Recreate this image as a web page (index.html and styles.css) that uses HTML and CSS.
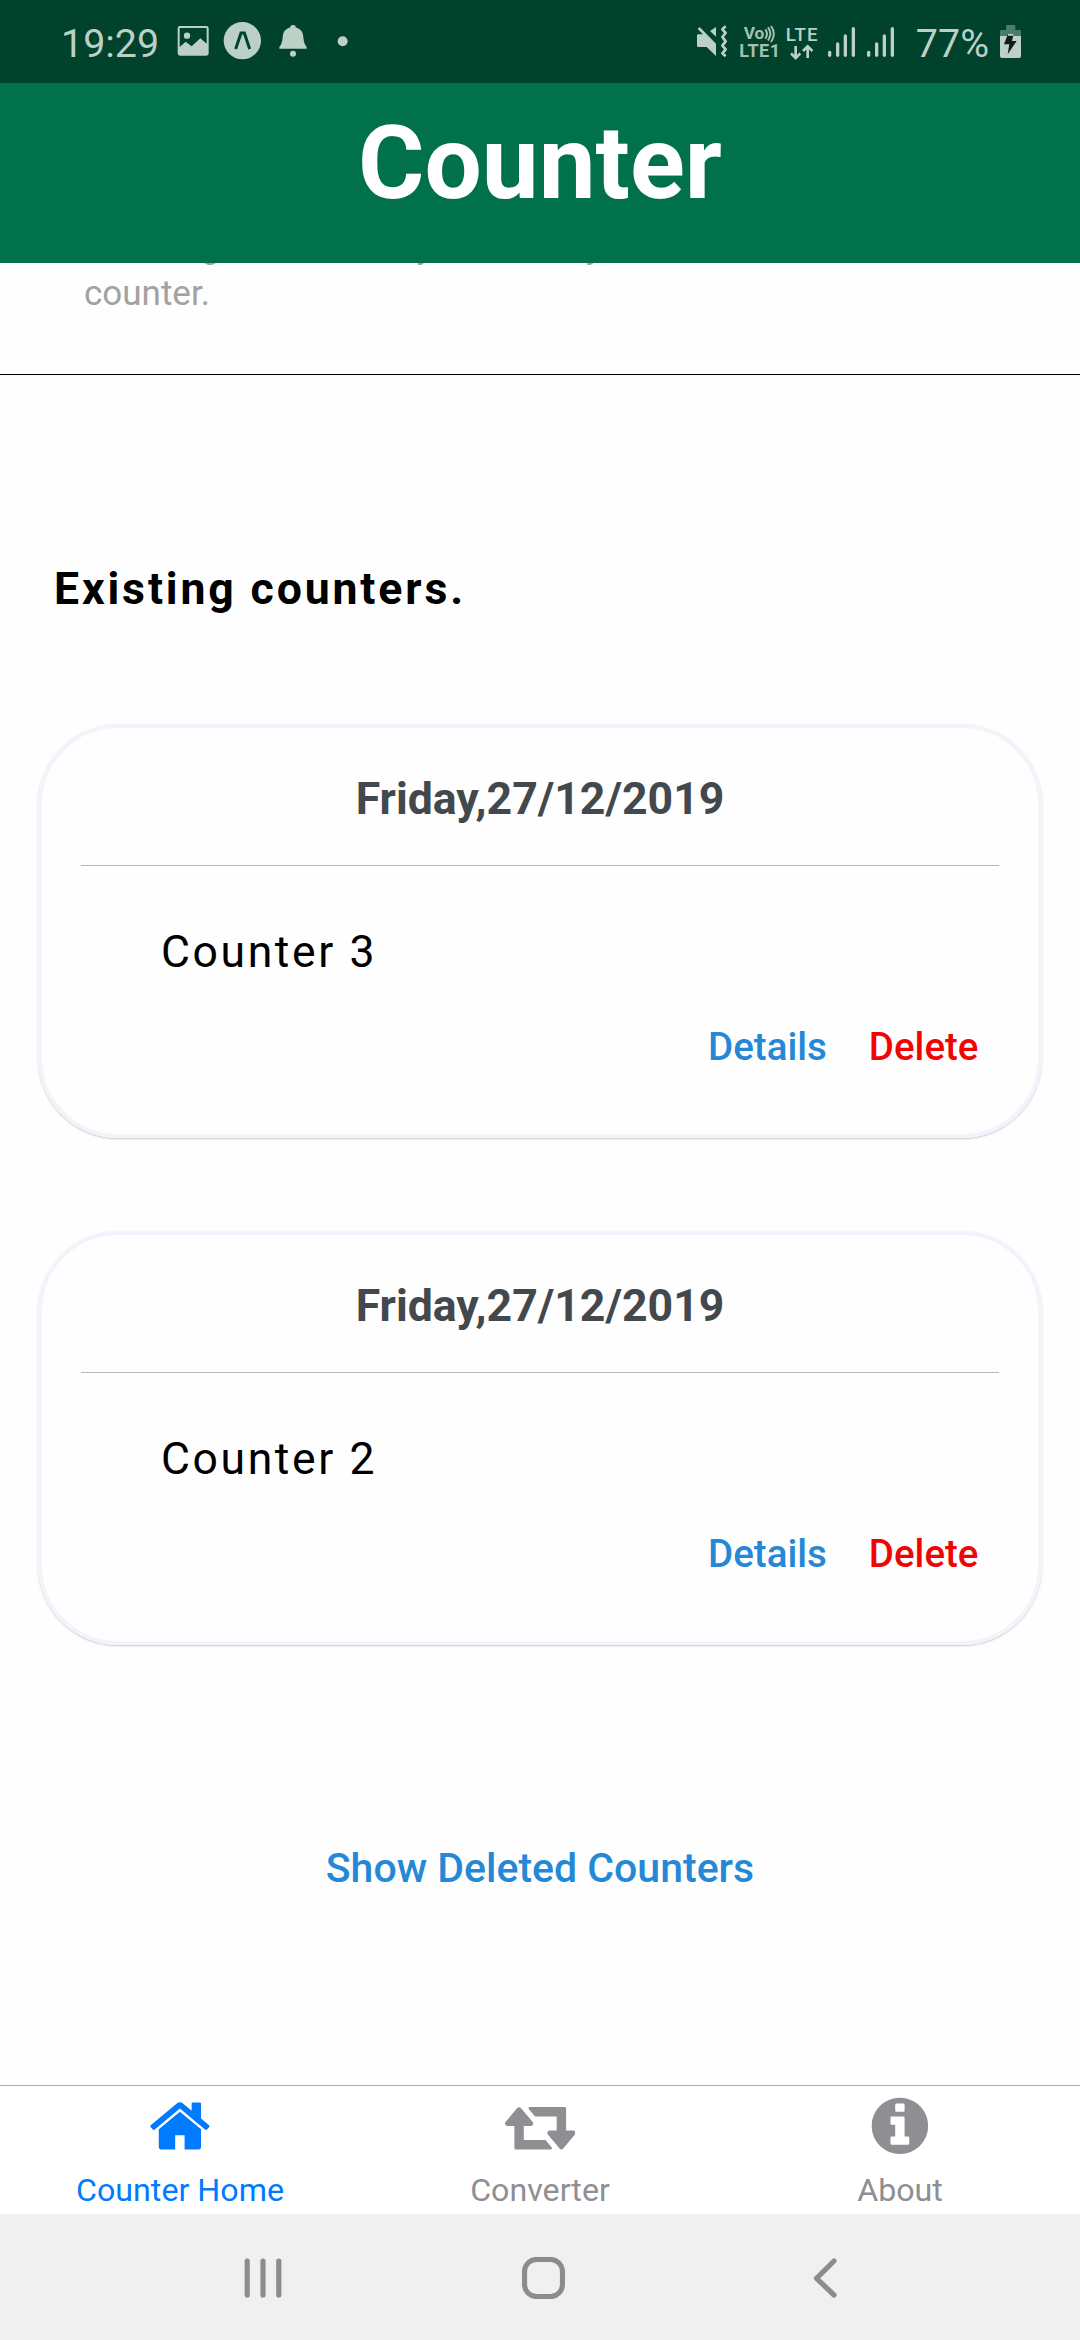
FILE: index.html
```html
<!DOCTYPE html>
<html lang="en">
<head>
<meta charset="utf-8">
<title>Counter</title>
<link rel="stylesheet" href="styles.css">
</head>
<body>
<div class="screen">
  <div class="status">
    <span class="status-text">19:29</span>
    <svg class="st-picture" width="34" height="83" viewBox="408 0 102 249" fill="#bcd0c7">
      <path fill-rule="evenodd" d="M420 78h79q7 0 7 7v75q0 7-7 7h-79q-7 0-7-7V85q0-7 7-7zM419 84v57l18-16 18 14 26-24 19 16V84z"/>
      <circle cx="441" cy="107" r="9.5"/>
    </svg>
    <svg class="st-expo" width="38" height="83" viewBox="550 0 114 249">
      <circle cx="608" cy="122" r="56" fill="#bcd0c7"/>
      <path d="M589 147l16-48h10l16 48" transform="translate(-1)" fill="none" stroke="#00422b" stroke-width="9"/>
    </svg>
    <svg class="st-bell" width="30" height="83" viewBox="714 0 90 249" fill="#bcd0c7">
      <path d="M751 82q0-7 8-7t8 7q22 6 23 30 1 19 10 29v5h-82v-5q9-10 10-29 1-24 23-30z"/>
      <circle cx="759" cy="161" r="9"/>
    </svg>
    <svg class="st-dot" width="11" height="83" viewBox="892 0 33 249" fill="#bcd0c7"><circle cx="909" cy="124" r="15"/></svg>
    <span class="spacer"></span>
    <svg class="st-mute" width="32" height="83" viewBox="45 0 96 249" fill="#bcd0c7">
      <path d="M48 107q0-4 4-4h14L50 87l6-6 49 50v37l-28-27H52q-4 0-4-4zM105 81v29L87 93z"/>
      <path d="M134 79l-10 9 10 11-10 12 10 13-10 13 10 11-10 12 10 9" fill="none" stroke="#bcd0c7" stroke-width="8" stroke-linejoin="round"/>
    </svg>
    <svg class="st-volte" width="40" height="83" viewBox="174 0 120 249" fill="#a5bfb3">
      <text class="net-label net-bold" x="188" y="118" font-size="52">Vo</text>
      <path d="M253 88q10 13 0 28M261 82q14 19 0 39M270 78q17 24 0 48" fill="none" stroke="#a5bfb3" stroke-width="6"/>
      <text class="net-label net-bold" x="175" y="171" font-size="54" textLength="122">LTE1</text>
    </svg>
    <svg class="st-lte" width="32" height="83" viewBox="315 0 96 249" fill="#bcd0c7">
      <text class="net-label" x="314" y="122" font-size="56" textLength="96">LTE</text>
      <path d="M344 138v36M330 160l14 14 14-14M380 174v-34M366 153l14-14 14 14" fill="none" stroke="#bcd0c7" stroke-width="8"/>
    </svg>
    <svg class="st-signal" width="29" height="83" viewBox="438 0 87 249" stroke="#bcd0c7" stroke-width="10" stroke-linecap="round">
      <path d="M446 157v9M470 132v34M493 108v58M517 86v80"/>
    </svg>
    <svg class="st-signal" width="29" height="83" viewBox="438 0 87 249" stroke="#bcd0c7" stroke-width="10" stroke-linecap="round">
      <path d="M446 157v9M470 132v34M493 108v58M517 86v80"/>
    </svg>
    <span class="status-text battery-level">77%</span>
    <svg class="st-battery" width="23" height="83" viewBox="954 0 69 249">
      <path d="M975 79q0-4 4-4h20q4 0 4 4v11h13q4 0 4 4v14h-63V94q0-4 4-4h14z" fill="#4b7c69"/>
      <path d="M957 108h63v60q0 6-6 6h-51q-6 0-6-6z" fill="#bcd0c7"/>
      <path d="M981 101h17l-5 22h14l-27 40 5-30h-16z" fill="#111c17"/>
      <path d="M982 101h16l-1 6h-17z" fill="#bcd0c7"/>
    </svg>
  </div>

  <header class="header"><h1 class="title">Counter</h1></header>

  <main class="content">
    <p class="intro"><span class="intro-lead">Counting is done in days and every new date starts its own</span><br>counter.</p>
    <h2 class="section-title">Existing counters.</h2>
    <div class="cards">
      <section class="card">
        <h3 class="card-date">Friday,27/12/2019</h3>
        <p class="card-name">Counter 3</p>
        <div class="card-actions"><a class="details">Details</a><a class="delete">Delete</a></div>
      </section>
      <section class="card">
        <h3 class="card-date">Friday,27/12/2019</h3>
        <p class="card-name">Counter 2</p>
        <div class="card-actions"><a class="details">Details</a><a class="delete">Delete</a></div>
      </section>
    </div>
    <a class="show-deleted">Show Deleted Counters</a>
  </main>

  <nav class="tabs">
    <a class="tab tab-active">
      <svg width="65.8" height="65.8" viewBox="0 0 1792 1792" fill="currentColor"><path d="M1472 992v480q0 26-19 45t-45 19h-384v-384h-256v384h-384q-26 0-45-19t-19-45v-480q0-1 .5-3t.5-3l575-474 575 474q1 2 1 6zm223-69l-62 74q-8 9-21 11h-3q-13 0-21-7l-692-577-692 577q-12 8-24 7-13-2-21-11l-62-74q-8-10-7-23.5t11-21.5l719-599q32-26 76-26t76 26l244 204v-195q0-14 9-23t23-9h192q14 0 23 9t9 23v408l219 182q10 8 11 21.5t-7 23.5z"/></svg>
      <span class="tab-label">Counter Home</span>
    </a>
    <a class="tab">
      <svg width="70.5" height="65.8" viewBox="0 0 1920 1792" fill="currentColor"><path d="M1280 1504q0 13-9.5 22.5t-22.5 9.5h-960q-8 0-13.5-2t-9-7-5.500-8-3-11.500-1-11.500v-600h-192q-26 0-45-19t-19-45q0-24 15-41l320-384q19-22 49-22t49 22l320 384q15 17 15 41 0 26-19 45t-45 19h-192v384h576q16 0 25 11l160 192q7 10 7 21zm640-416q0 24-15 41l-320 384q-20 23-49 23t-49-23l-320-384q-15-17-15-41 0-26 19-45t45-19h192v-384h-576q-16 0-25-12l-160-192q-7-9-7-20 0-13 9.500-22.500t22.500-9.500h960q8 0 13.500 2t9 7 5.500 8 3 11.500 1 11.500v600h192q26 0 45 19t19 45z"/></svg>
      <span class="tab-label">Converter</span>
    </a>
    <a class="tab">
      <svg width="65.8" height="65.8" viewBox="0 0 1792 1792" fill="currentColor"><path d="M1152 1376v-160q0-14-9-23t-23-9h-96v-512q0-14-9-23t-23-9h-320q-14 0-23 9t-9 23v160q0 14 9 23t23 9h96v320h-96q-14 0-23 9t-9 23v160q0 14 9 23t23 9h448q14 0 23-9t9-23zm-128-896v-160q0-14-9-23t-23-9h-192q-14 0-23 9t-9 23v160q0 14 9 23t23 9h192q14 0 23-9t9-23zm640 416q0 209-103 385.500t-279.500 279.500-385.500 103-385.500-103-279.500-279.500-103-385.500 103-385.500 279.500-279.500 385.500-103 385.500 103 279.500 279.500 103 385.500z"/></svg>
      <span class="tab-label">About</span>
    </a>
  </nav>

  <div class="system-nav">
    <svg width="38" height="42" viewBox="0 0 38 42"><path d="M3.200 4v34M19 4v34M34.800 4v34"/></svg>
    <svg class="nav-home" width="43" height="42" viewBox="0 0 43 42"><rect x="2.500" y="2.500" width="38" height="37" rx="12"/></svg>
    <svg class="nav-back" width="24" height="42" viewBox="0 0 24 42"><path d="M21 4L3.500 21.300 21 38"/></svg>
  </div>
</div>
</body>
</html>
```
FILE: styles.css
```css
* { box-sizing: border-box; margin: 0; padding: 0; }

body { font-family: Roboto, "Noto Sans", sans-serif; background: #fff; }

svg { display: block; flex: none; }

.screen {
  width: 1080px;
  height: 2340px;
  display: flex;
  flex-direction: column;
  overflow: hidden;
  background: #fefefe;
}

/* Status bar */
.status {
  flex: none;
  height: 83px;
  display: flex;
  align-items: flex-start;
  padding: 0 58px 0 61px;
  background: #00422b;
  color: #bcd0c7;
}
.status-text { font-size: 39.400px; line-height: 87px; }
.spacer { flex: 1; }
.st-picture { margin-left: 17px; }
.st-expo { margin-left: 13px; }
.st-bell { margin-left: 17px; }
.st-dot { margin-left: 29px; }
.st-volte { margin-left: 11px; }
.st-lte { margin-left: 7px; }
.st-signal { margin-left: 9px; }
.st-signal + .st-signal { margin-left: 10px; }
.battery-level { margin-left: 20.800px; }
.st-battery { margin-left: 10px; }
.net-label { font-weight: 500; }
.net-bold { font-weight: 700; }

/* Header */
.header { flex: none; height: 180px; background: #00714a; color: #fff; }
.title { font-size: 101.500px; font-weight: 700; line-height: 161px; text-align: center; }

/* Scrolled content */
.content { flex: none; height: 1822px; overflow: hidden; display: flex; flex-direction: column; }
.intro {
  flex: none;
  margin-top: -40px;
  padding: 0 84px 57px;
  border-bottom: 1px solid #000;
  font-size: 35px;
  line-height: 47px;
  color: #a2a2a2;
}
.intro-lead { letter-spacing: -0.6px; white-space: nowrap; }
.section-title {
  margin: 188px 0 0 54px;
  font-size: 44.600px;
  line-height: 52px;
  letter-spacing: 2.850px;
  color: #000;
}
.cards { margin: 109px 38px 0; display: flex; flex-direction: column; gap: 93px; }
.card {
  height: 414px;
  padding: 5px 39px 0;
  border: 4px solid #f1f4fb;
  border-radius: 80px;
  box-shadow: 0 1px 2px rgba(0, 0, 0, 0.22);
}
.card-date {
  border-bottom: 1px solid #b7babc;
  font-size: 44.600px;
  line-height: 132px;
  text-align: center;
  color: #43484d;
}
.card-name {
  margin-top: 60px;
  padding-left: 80px;
  font-size: 44.500px;
  line-height: 52px;
  letter-spacing: 2.600px;
  color: #000;
}
.card-actions {
  margin-top: 46px;
  padding-right: 20.500px;
  display: flex;
  justify-content: flex-end;
  gap: 42px;
  font-size: 38.500px;
  font-weight: 500;
  line-height: 46px;
}
.details { color: #2588d6; }
.delete { color: #f00505; }
.show-deleted {
  margin-top: 198px;
  font-size: 41px;
  font-weight: 500;
  line-height: 50px;
  text-align: center;
  color: #2588d6;
}

/* Bottom tabs */
.tabs {
  flex: none;
  height: 129px;
  display: grid;
  grid-template-columns: repeat(3, 1fr);
  border-top: 1px solid #a7a7aa;
  background: #fff;
}
.tab { display: flex; flex-direction: column; align-items: center; padding-top: 7.300px; color: #8e8e93; }
.tab-active { color: #007aff; }
.tab-label { margin-top: 12px; font-size: 32.200px; line-height: 38px; }

/* System navigation */
.system-nav {
  flex: 1;
  display: flex;
  padding: 43px 0 0 244px;
  background: #f0f0f0;
}
.nav-home { margin-left: 240px; }
.nav-back { margin-left: 248px; }
.system-nav svg { fill: none; stroke: #8c8c8c; stroke-width: 5.200; stroke-linecap: round; stroke-linejoin: round; }
```
